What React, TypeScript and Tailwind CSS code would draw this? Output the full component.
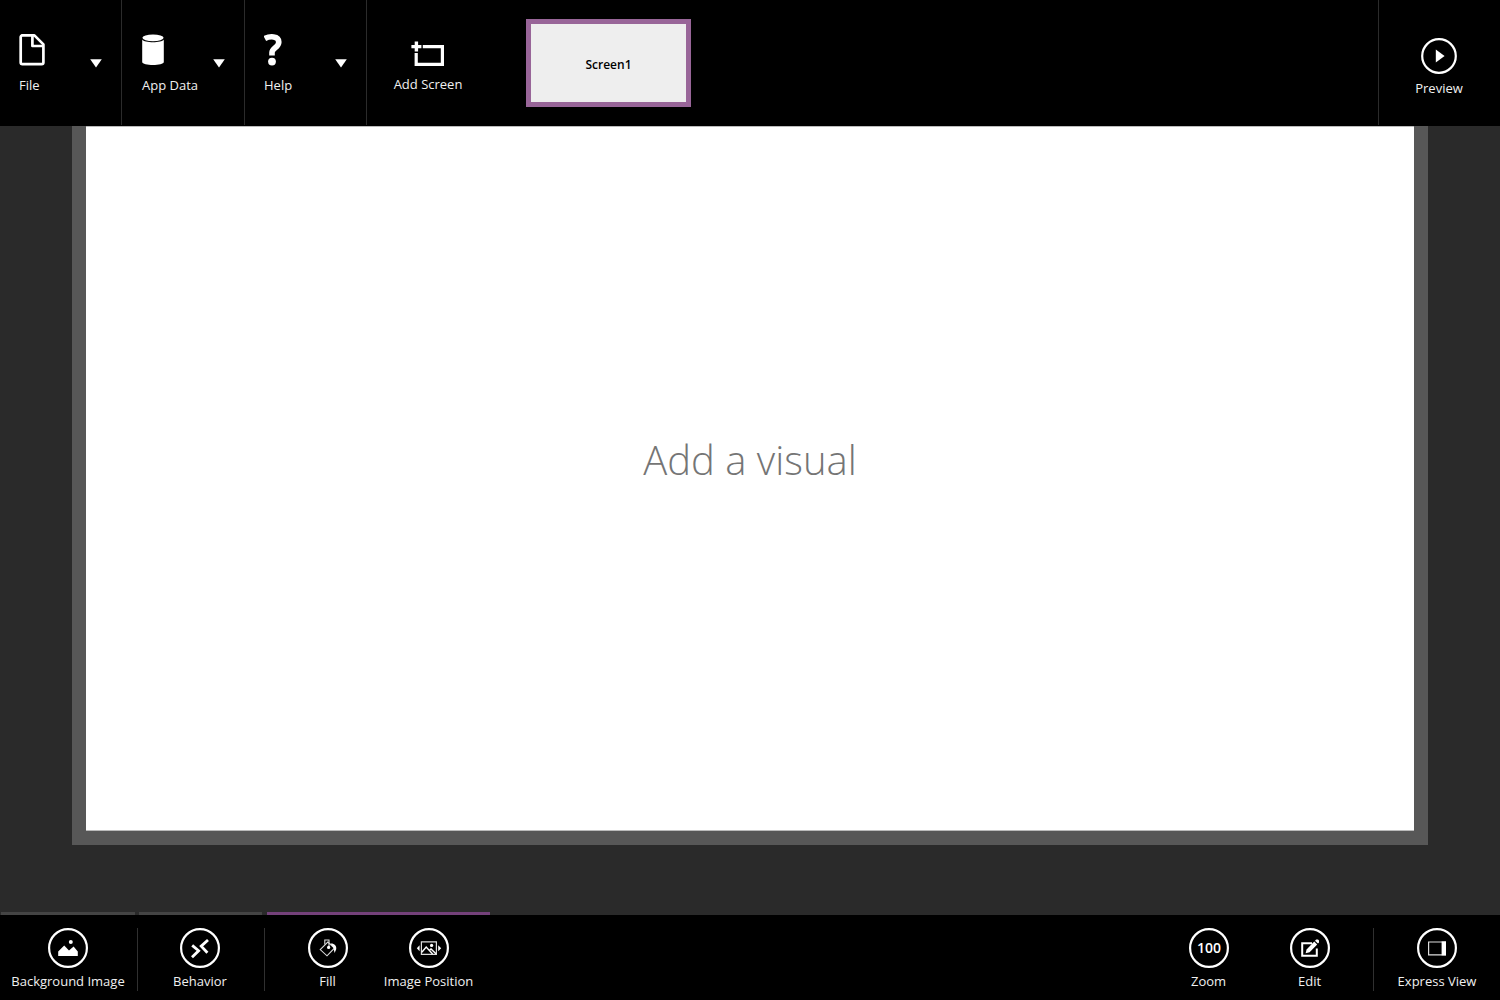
import type { ReactNode } from "react";

function Caret() {
  return (
    <svg width="12" height="9" viewBox="0 0 12 9" fill="#fff" aria-hidden="true">
      <path d="M.2 .2H11.8L6 8.6Z" />
    </svg>
  );
}

function FileIcon() {
  return (
    <svg width="26" height="32" viewBox="0 0 26 32" fill="none" stroke="#fff" strokeWidth="2.7" strokeLinejoin="round" aria-hidden="true">
      <path d="M3 1.4H15.4L24.4 10.4V28.4a1.7 1.7 0 0 1-1.7 1.7H3.4a1.7 1.7 0 0 1-1.7-1.7V3.1A1.7 1.7 0 0 1 3.4 1.4Z" />
      <path d="M13.4 2V12H24" />
    </svg>
  );
}

function DataIcon() {
  return (
    <svg width="22" height="32" viewBox="0 0 22 32" fill="#fff" aria-hidden="true">
      <ellipse cx="11" cy="3.8" rx="10.6" ry="3.4" />
      <path d="M.2 5.6C2.4 9.2 19.6 9.2 21.8 5.6V28C21.8 32 .2 32 .2 28Z" />
    </svg>
  );
}

function HelpIcon() {
  return (
    <svg width="18" height="32" viewBox="0 0 18 32" aria-hidden="true">
      <path d="M.8 4.6C5.6 2 14.8 1.6 14.8 8C14.8 13.8 8 13.6 8 18.6V21.4" fill="none" stroke="#fff" strokeWidth="5.6" />
      <circle cx="8" cy="27.6" r="3.9" fill="#fff" />
    </svg>
  );
}

function AddScreenIcon() {
  return (
    <svg width="34" height="26" viewBox="0 0 34 26" fill="none" stroke="#fff" aria-hidden="true">
      <path d="M.4 5.6H10.4M5.4 .6V10.6" strokeWidth="3.4" />
      <path d="M11.8 5.7H31.4V23.4H5.2V12" strokeWidth="3.2" />
    </svg>
  );
}

function PreviewIcon() {
  return (
    <svg width="36" height="36" viewBox="0 0 36 36" aria-hidden="true">
      <circle cx="18" cy="18" r="16.8" fill="none" stroke="#fff" strokeWidth="2.2" />
      <path d="M14.8 11.6L23.6 18L14.8 24.4Z" fill="#fff" />
    </svg>
  );
}

function MenuSection({ label, icon, width }: { label: string; icon: ReactNode; width: string }) {
  return (
    <div className={`flex h-[125px] items-start justify-between border-r border-[#2b2b2b] pr-[19px] ${width}`}>
      <button type="button" className="mt-[34px] flex flex-col items-start gap-[9px] whitespace-nowrap">
        {icon}
        <span>{label}</span>
      </button>
      <button type="button" aria-label={`${label} menu`} className="mt-[59px]">
        <Caret />
      </button>
    </div>
  );
}

function Tool({ label, width, children }: { label: string; width: string; children: ReactNode }) {
  return (
    <button type="button" className={`flex flex-col items-center gap-[3px] whitespace-nowrap ${width}`}>
      <svg width="40" height="40" viewBox="0 0 40 40" fill="none" aria-hidden="true">
        <circle cx="20" cy="20" r="18.9" stroke="#fff" strokeWidth="2.2" />
        {children}
      </svg>
      <span>{label}</span>
    </button>
  );
}

function Divider() {
  return <div className="h-[63px] w-px bg-[#303030]" />;
}

export default function App() {
  return (
    <div className="flex min-h-screen flex-col bg-[#2a2a2a] font-['Open_Sans','Noto_Sans',sans-serif] text-[13px] leading-5 text-[#f0f0f0]">
      <header className="flex h-[126px] bg-black">
        <MenuSection label="File" icon={<FileIcon />} width="w-[122px] pl-[19px]" />
        <MenuSection label="App Data" icon={<DataIcon />} width="w-[123px] pl-5" />
        <MenuSection label="Help" icon={<HelpIcon />} width="w-[122px] pl-[19px]" />
        <button type="button" className="flex w-[122px] flex-col items-center gap-[7px] self-start pt-[41px]">
          <AddScreenIcon />
          <span>Add Screen</span>
        </button>
        <button type="button" className="ml-[37px] mt-[19px] flex h-[88px] w-[165px] items-center justify-center border-[5px] border-[#986598] bg-[#eee] pt-[3px] text-xs font-semibold text-black">
          Screen1
        </button>
        <button type="button" className="ml-auto flex h-[125px] w-[122px] flex-col items-center gap-1 border-l border-[#2b2b2b] pr-px pt-[38px]">
          <PreviewIcon />
          <span>Preview</span>
        </button>
      </header>

      <main className="flex flex-1 flex-col px-[72px] pb-[67px]">
        <div className="flex flex-1 flex-col bg-[#575757] px-[14px] pb-[14px]">
          <div className="flex flex-1 items-center justify-center border-y border-[#bbb] bg-white pb-[38px]">
            <h1 className="text-[40px] font-light leading-[54px] text-[#757575]">Add a visual</h1>
          </div>
        </div>
      </main>

      <div className="flex h-[3px] pl-px">
        <div className="w-[134px] bg-[#444]" />
        <div className="ml-1 w-[123px] bg-[#444]" />
        <div className="ml-[5px] w-[223px] bg-[#74417a]" />
      </div>
      <footer className="flex h-[85px] bg-black pt-[13px]">
        <Tool label="Background Image" width="w-[137px] pr-px">
          <path d="M10.2 28V23.4L16.2 17.4L21 22.4L25.6 18.6L29.8 23.4V28Z" fill="#fff" />
          <circle cx="22.8" cy="14" r="2" fill="#fff" />
        </Tool>
        <Divider />
        <Tool label="Behavior" width="w-[126px] pr-0.5">
          <path d="M12.2 17.4L18.6 22.8L12 29.2M28 12L21.2 18.2L27.4 24.8" stroke="#fff" strokeWidth="2.8" />
        </Tool>
        <Divider />
        <div className="flex pl-3">
          <Tool label="Fill" width="w-[101px]">
            <path d="M12.2 21.6L19.8 14L26.4 20.2L19 27.8Z" stroke="#ddd" strokeWidth="1.1" />
            <path d="M16.8 16.6V12H21V19" stroke="#ddd" strokeWidth="1.1" />
            <circle cx="20.6" cy="19.4" r="1.6" fill="#fff" />
            <path d="M22.2 15.6C26.4 15.2 28.8 18 28.2 21.2L26.6 25L25.4 19.4Z" fill="#fff" />
          </Tool>
          <Tool label="Image Position" width="w-[101px]">
            <path d="M12.4 13.8H27.4V26.4H12.4Z" stroke="#ddd" strokeWidth="1.2" />
            <path d="M12.8 24.2L17.2 19L23.6 26M20.8 21.8L22 21L27 25.8" stroke="#fff" strokeWidth="1.4" />
            <circle cx="22.6" cy="17.4" r="1.6" fill="#fff" />
            <path d="M10.6 17.2V23.2L7.8 20.2ZM29.2 17.2V23.2L32.2 20.2Z" fill="#fff" />
          </Tool>
        </div>
        <div className="ml-auto flex pr-[13px]">
          <Tool label="Zoom" width="w-[101px]">
            <text x="20" y="25.4" textAnchor="middle" fill="#fff" fontSize="14" fontWeight="600">100</text>
          </Tool>
          <Tool label="Edit" width="w-[101px]">
            <path d="M22 15.2H12.2V27.8H26.8V20.6" stroke="#fff" strokeWidth="2" />
            <path d="M15.6 25.2L16.6 21.4L24.2 13.6L27.2 16.4L19.6 24.2Z" fill="#fff" />
            <path d="M25 12.8L26.2 11.6H28L29 12.6V14.4L28 15.6Z" fill="#fff" />
          </Tool>
        </div>
        <Divider />
        <Tool label="Express View" width="w-[126px]">
          <path d="M11.6 14H28.4V26.8H11.6Z" stroke="#ddd" strokeWidth="1.2" />
          <path d="M24.6 13.4H29V27.4H24.6Z" fill="#fff" />
        </Tool>
      </footer>
    </div>
  );
}
